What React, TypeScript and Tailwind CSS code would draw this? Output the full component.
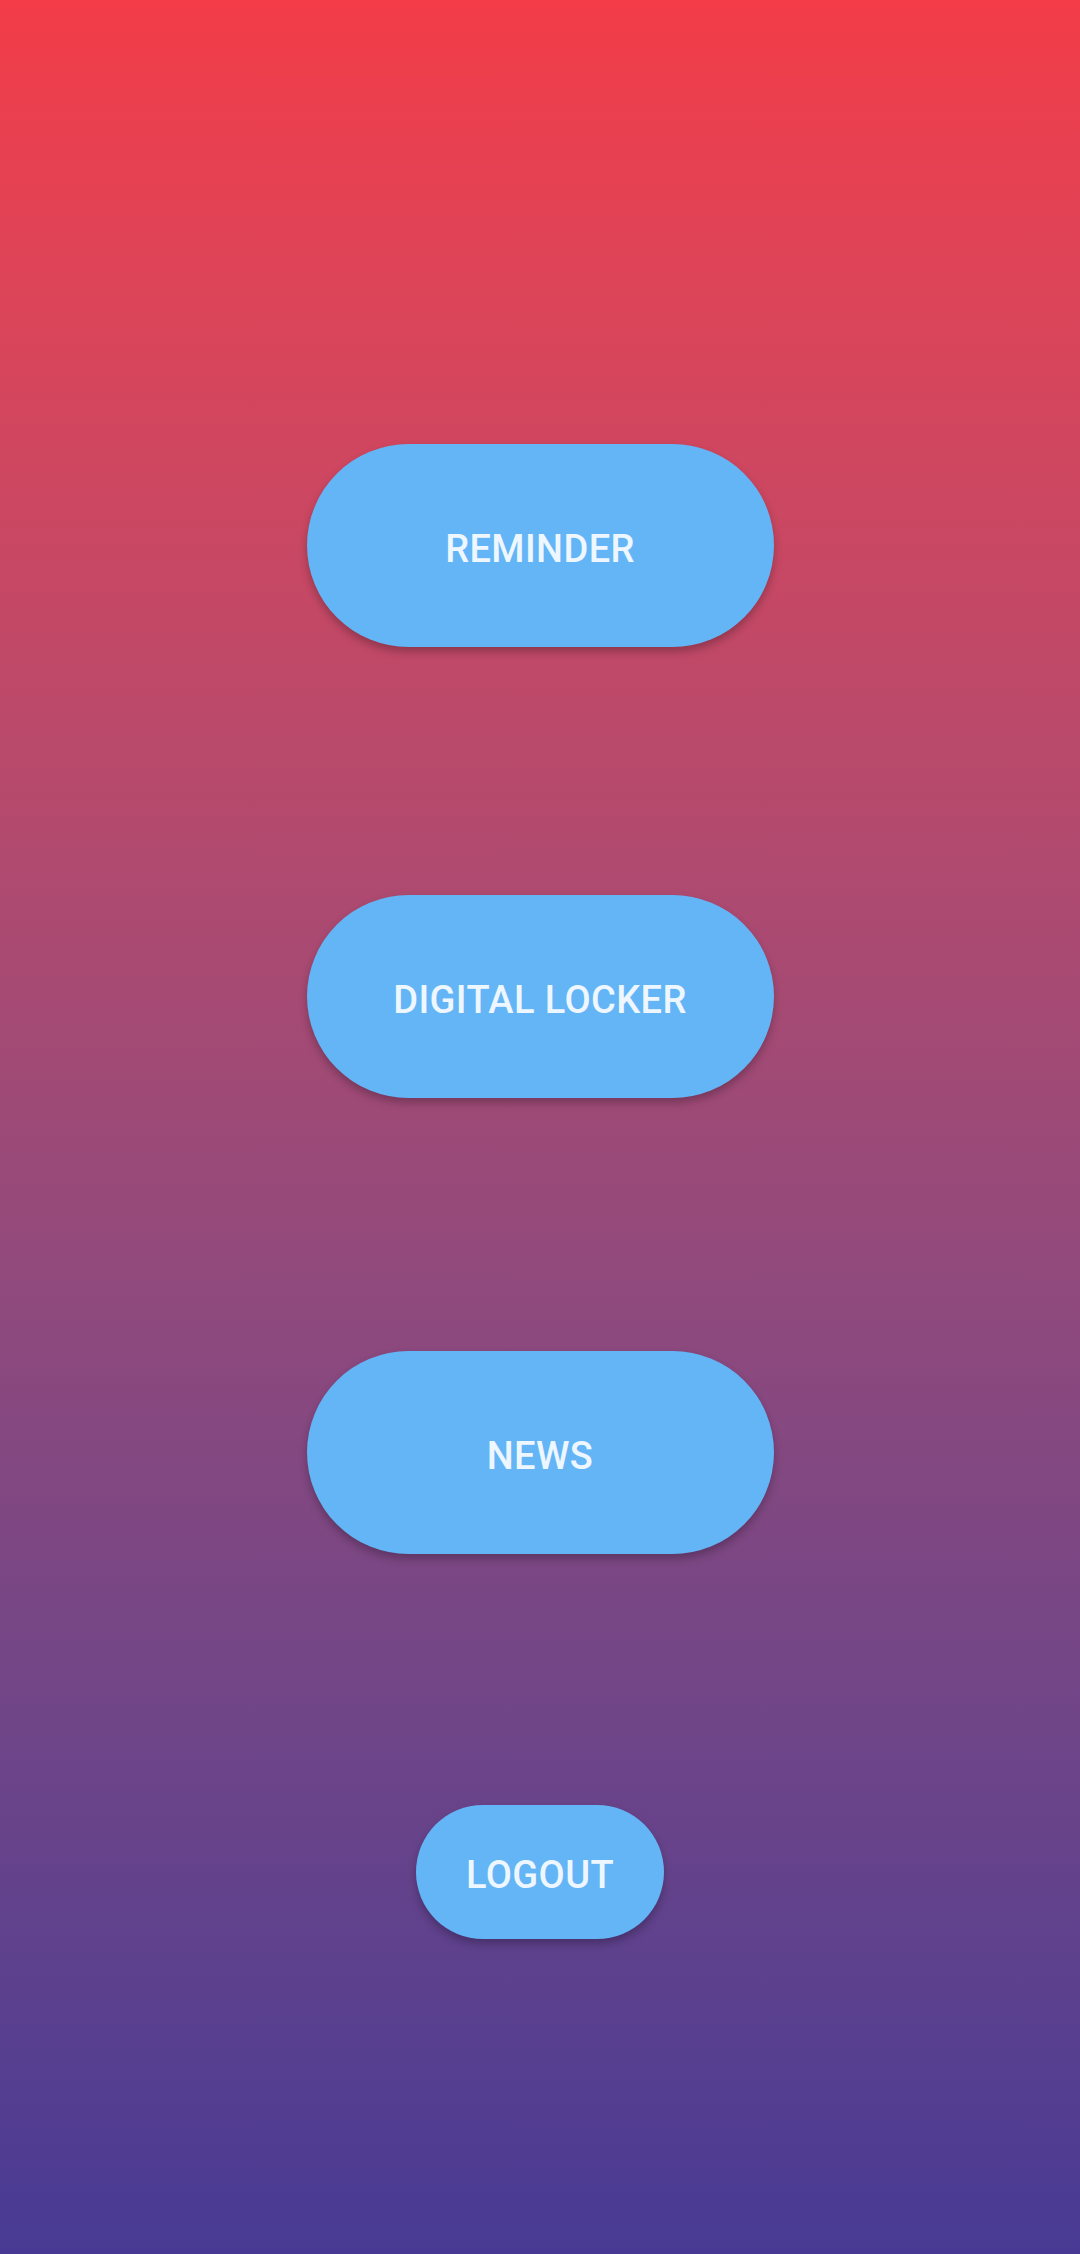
import React from 'react';

const buttons = [
  { label: 'REMINDER', gap: 'mt-0' },
  { label: 'DIGITAL LOCKER', gap: 'mt-[248px]' },
  { label: 'NEWS', gap: 'mt-[253px]' },
];

export default function App() {
  return (
    <div
      className="w-[1080px] h-[2254px] bg-gradient-to-b from-[#f33c48] to-[#483a94] flex flex-col items-center pt-[444px]"
      style={{ fontFamily: 'Roboto, "Noto Sans", sans-serif' }}
    >
      {buttons.map((b) => (
        <button
          key={b.label}
          className={`${b.gap} w-[467px] h-[203px] pt-[8px] rounded-full bg-[#64b5f6] text-[#eef7ff] text-[38px] font-medium tracking-[0.4px] shadow-[0_5px_8px_rgba(0,0,0,0.25)] flex items-center justify-center`}
        >
          {b.label}
        </button>
      ))}

      {/* Logout */}
      <button className="mt-[251px] w-[248px] h-[134px] pt-[6px] rounded-full bg-[#64b5f6] text-[#eef7ff] text-[38px] font-medium tracking-[0.4px] shadow-[0_5px_8px_rgba(0,0,0,0.25)] flex items-center justify-center">
        LOGOUT
      </button>
    </div>
  );
}
